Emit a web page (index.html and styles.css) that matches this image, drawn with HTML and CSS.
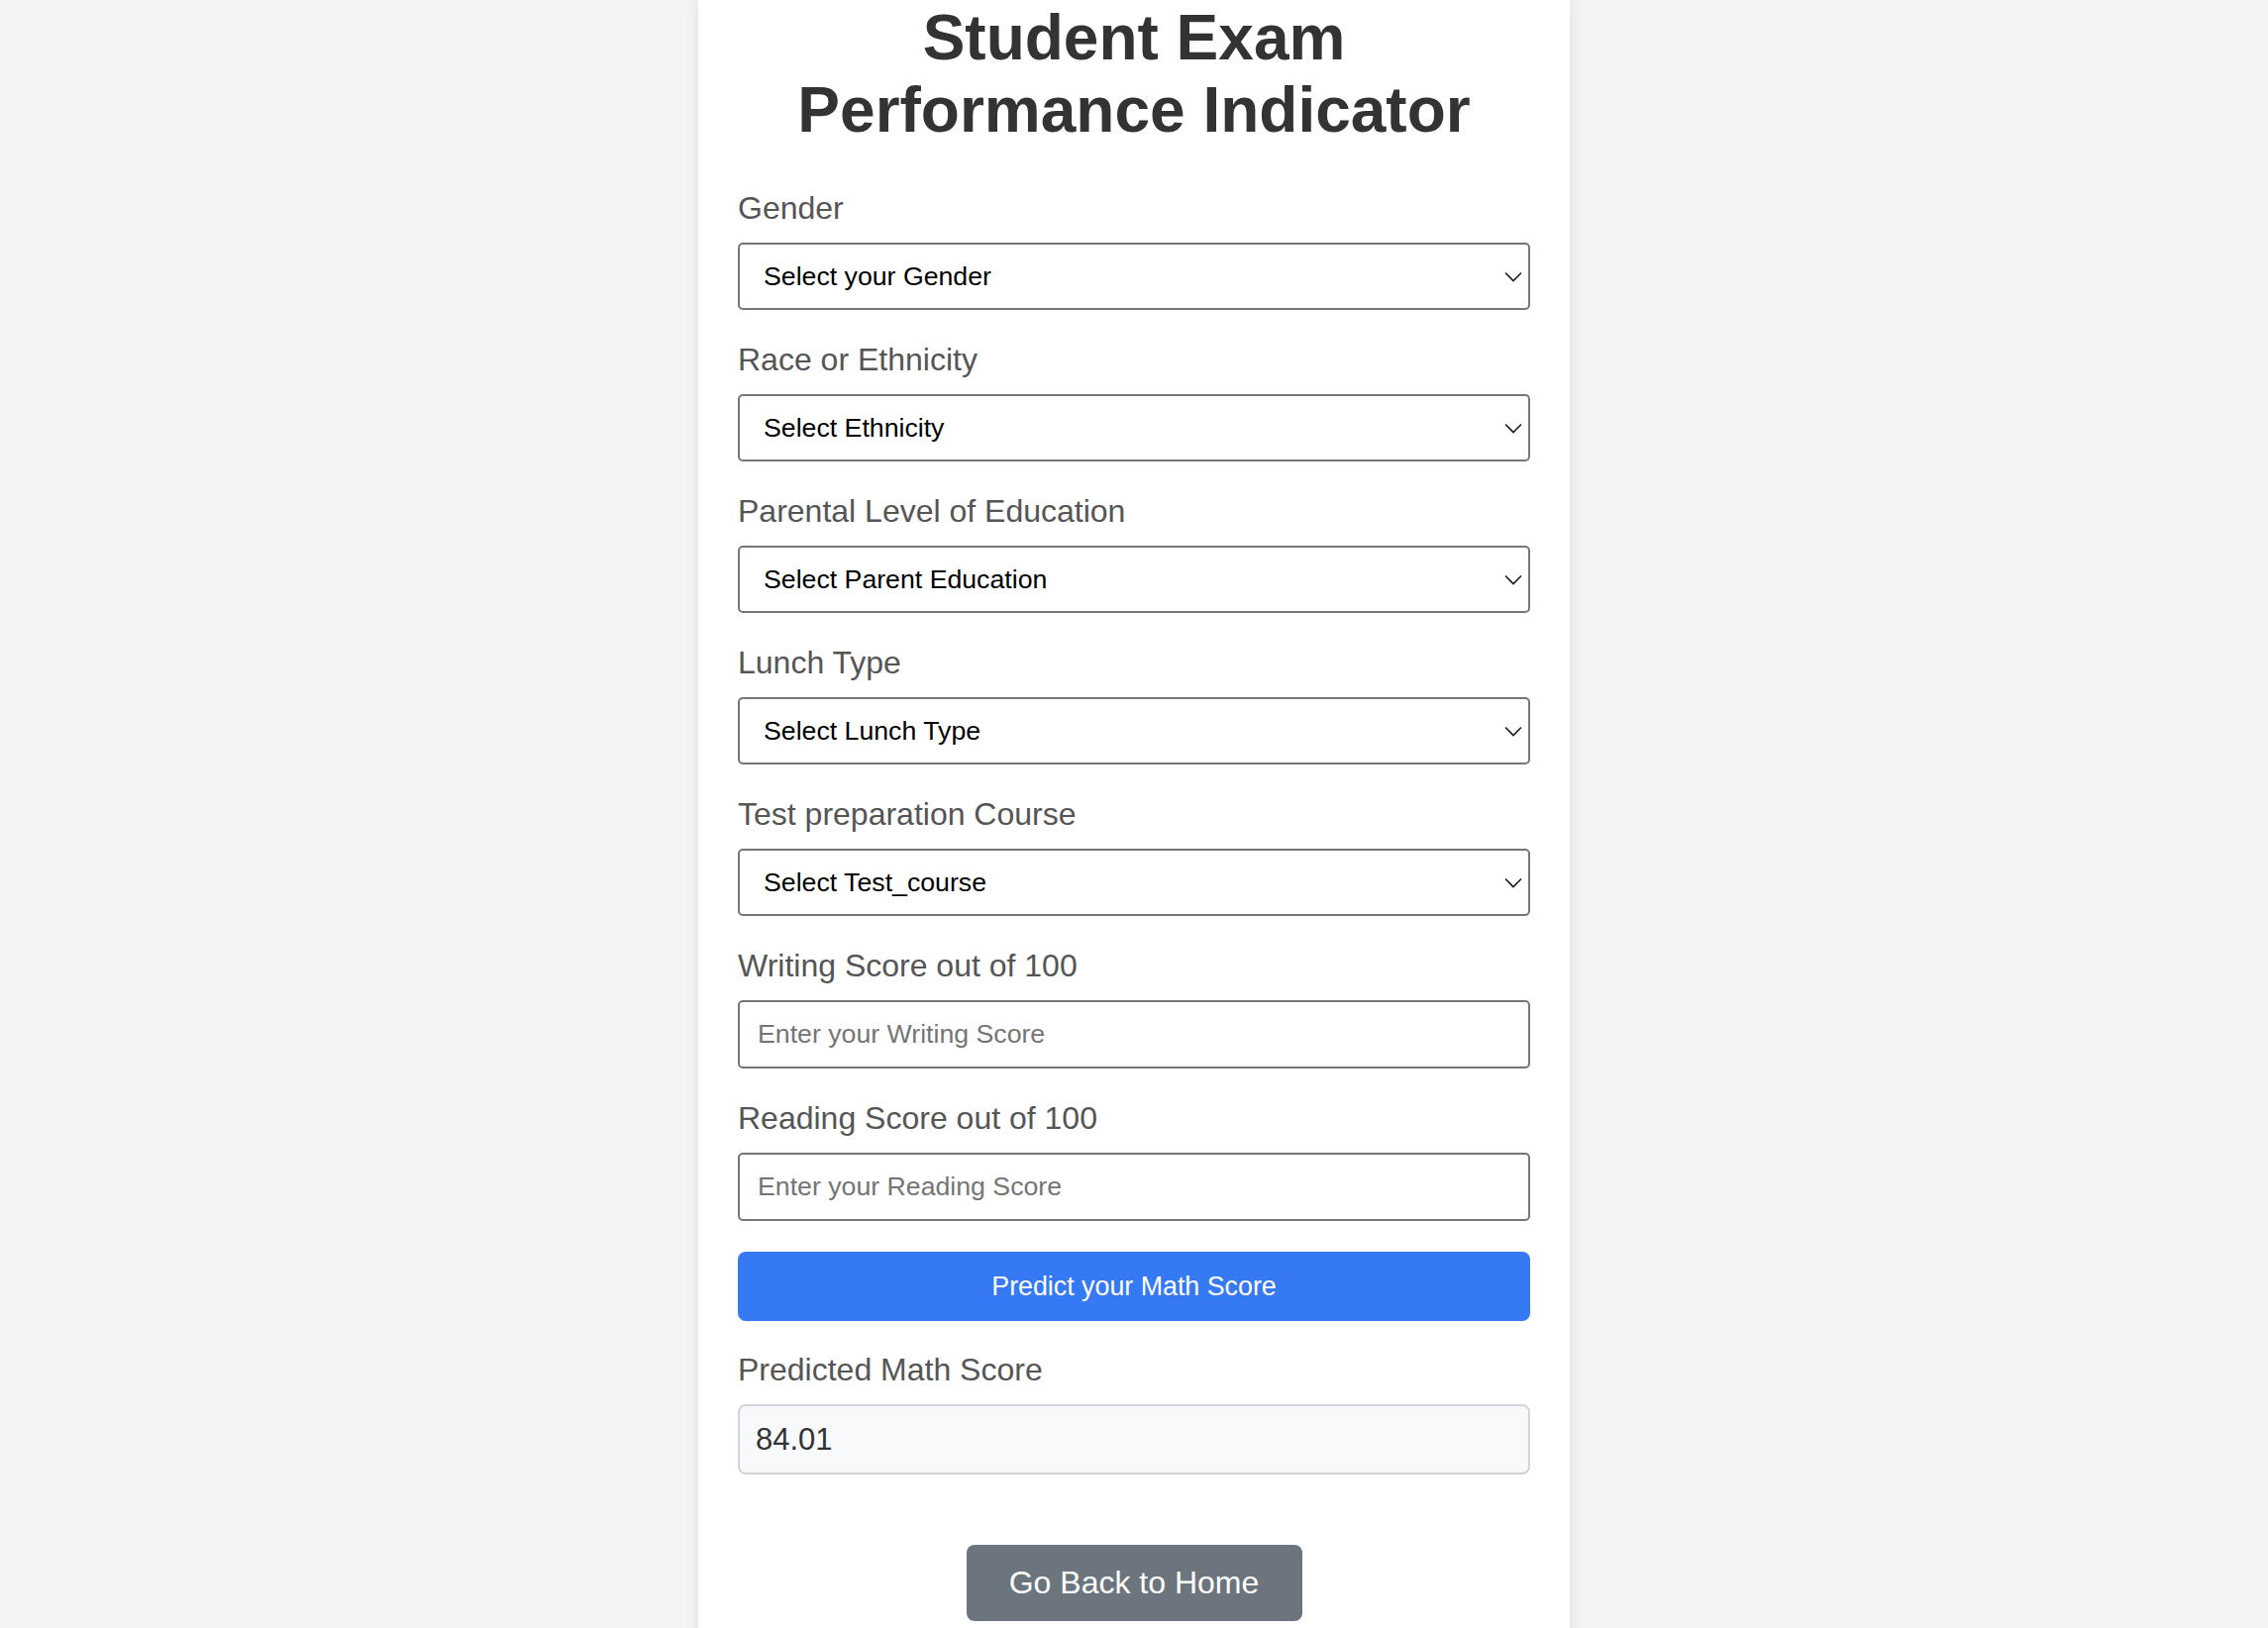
FILE: index.html
```html
<!DOCTYPE html>
<html lang="en">
<head>
<meta charset="utf-8">
<title>Student Exam Performance Indicator</title>
<link rel="stylesheet" href="styles.css">
</head>
<body>
<div class="card">
  <h1 class="title">Student Exam Performance Indicator</h1>
  <form class="form">
    <div class="group">
      <label class="label">Gender</label>
      <div class="select-wrap">
        <select class="control select"><option>Select your Gender</option></select>
        <svg class="chevron" width="18" height="11" viewBox="0 0 18 11"><path d="M1 1.5 L9 9.5 L17 1.5" fill="none" stroke="#1e1e1e" stroke-width="1.6"/></svg>
      </div>
    </div>
    <div class="group">
      <label class="label">Race or Ethnicity</label>
      <div class="select-wrap">
        <select class="control select"><option>Select Ethnicity</option></select>
        <svg class="chevron" width="18" height="11" viewBox="0 0 18 11"><path d="M1 1.5 L9 9.5 L17 1.5" fill="none" stroke="#1e1e1e" stroke-width="1.6"/></svg>
      </div>
    </div>
    <div class="group">
      <label class="label">Parental Level of Education</label>
      <div class="select-wrap">
        <select class="control select"><option>Select Parent Education</option></select>
        <svg class="chevron" width="18" height="11" viewBox="0 0 18 11"><path d="M1 1.5 L9 9.5 L17 1.5" fill="none" stroke="#1e1e1e" stroke-width="1.6"/></svg>
      </div>
    </div>
    <div class="group">
      <label class="label">Lunch Type</label>
      <div class="select-wrap">
        <select class="control select"><option>Select Lunch Type</option></select>
        <svg class="chevron" width="18" height="11" viewBox="0 0 18 11"><path d="M1 1.5 L9 9.5 L17 1.5" fill="none" stroke="#1e1e1e" stroke-width="1.6"/></svg>
      </div>
    </div>
    <div class="group">
      <label class="label">Test preparation Course</label>
      <div class="select-wrap">
        <select class="control select"><option>Select Test_course</option></select>
        <svg class="chevron" width="18" height="11" viewBox="0 0 18 11"><path d="M1 1.5 L9 9.5 L17 1.5" fill="none" stroke="#1e1e1e" stroke-width="1.6"/></svg>
      </div>
    </div>
    <div class="group">
      <label class="label">Writing Score out of 100</label>
      <input class="control input" type="text" placeholder="Enter your Writing Score">
    </div>
    <div class="group">
      <label class="label">Reading Score out of 100</label>
      <input class="control input" type="text" placeholder="Enter your Reading Score">
    </div>
    <button class="predict" type="button">Predict your Math Score</button>
  </form>
  <div class="result">
    <div class="label">Predicted Math Score</div>
    <div class="result-box">84.01</div>
  </div>
  <div class="home-row">
    <a class="home-btn">Go Back to Home</a>
  </div>
</div>
</body>
</html>
```

FILE: styles.css
```css
html, body {
  margin: 0;
  padding: 0;
}

body {
  background: #f4f4f4;
  font-family: "Liberation Sans", Arial, Helvetica, sans-serif;
}

.card {
  width: 800px;
  margin: 0 auto;
  padding: 2px 40px 60px;
  background: #ffffff;
  box-shadow: 0 0 14px rgba(0, 0, 0, 0.09);
  min-height: 1700px;
}

.title {
  margin: 0 0 45px;
  font-size: 64px;
  line-height: 73px;
  font-weight: bold;
  text-align: center;
  color: #333333;
}

.form {
  display: flex;
  flex-direction: column;
}

.group {
  display: flex;
  flex-direction: column;
  margin-bottom: 33px;
}

.label {
  display: block;
  font-size: 32px;
  line-height: 34px;
  color: #555555;
  margin-bottom: 18px;
}

.select-wrap {
  position: relative;
}

.control {
  box-sizing: border-box;
  width: 100%;
  margin: 0;
  border: 2px solid #767676;
  border-radius: 5px;
  background: #ffffff;
  font-family: "Liberation Sans", Arial, Helvetica, sans-serif;
  outline: none;
}

.select {
  -webkit-appearance: none;
  appearance: none;
  height: 68px;
  padding: 0 40px 0 24px;
  font-size: 26.7px;
  color: #000000;
}

.chevron {
  position: absolute;
  right: 8px;
  top: 29px;
  pointer-events: none;
}

.input {
  height: 69px;
  padding: 0 18px;
  font-size: 26.7px;
  color: #000000;
}

.input::placeholder {
  color: #757575;
}

.predict {
  box-sizing: border-box;
  width: 100%;
  height: 70px;
  margin: -2px 0 0;
  border: none;
  border-radius: 8px;
  background: #3679f5;
  color: #ffffff;
  font-family: "Liberation Sans", Arial, Helvetica, sans-serif;
  font-size: 26.8px;
}

.result {
  margin-top: 32px;
}

.result-box {
  box-sizing: border-box;
  height: 71px;
  padding: 0 16px;
  display: flex;
  align-items: center;
  background: #f8f9fa;
  border: 2px solid #d1d5db;
  border-radius: 8px;
  font-size: 31px;
  color: #333333;
}

.home-row {
  display: flex;
  justify-content: center;
  margin-top: 71px;
}

.home-btn {
  display: flex;
  align-items: center;
  justify-content: center;
  box-sizing: border-box;
  width: 339px;
  height: 77px;
  border-radius: 8px;
  background: #6c757d;
  color: #ffffff;
  font-size: 32px;
  text-decoration: none;
}
```
